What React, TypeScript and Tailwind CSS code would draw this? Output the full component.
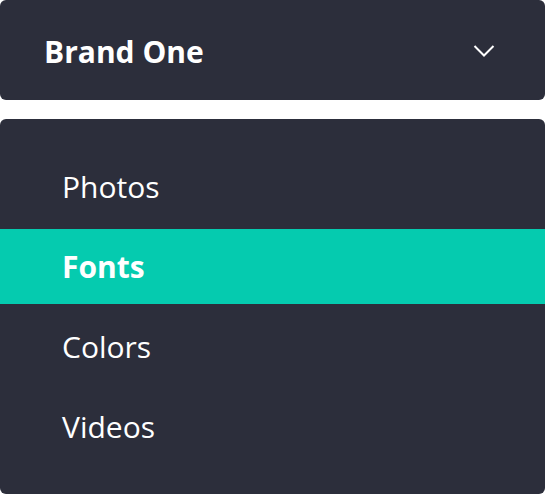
import React from 'react';

const items = ['Photos', 'Fonts', 'Colors', 'Videos'];

export default function App() {
    const active = 'Fonts';
    return (
        <div className="w-[545px] h-[494px] bg-white flex flex-col gap-[19px] font-['Open_Sans',sans-serif] text-white">
            <button className="h-[100px] w-full rounded-md bg-[#2c2e3b] flex items-center justify-between pl-[44px] pr-[50px]">
                <span className="text-[30px] font-bold leading-none mt-[3px]">Brand One</span>
                <svg width="22" height="14" viewBox="0 0 22 14" fill="none" className="mt-[2px]">
                    <path d="M1.5 2L11 11.5L20.5 2" stroke="white" strokeWidth="2" />
                </svg>
            </button>
            <ul className="h-[375px] w-full rounded-md bg-[#2c2e3b] flex flex-col gap-[5px] py-[30px]">
                {items.map((item) => (
                    <li
                        key={item}
                        className={
                            item === active
                                ? 'h-[75px] flex items-center pl-[62px] bg-[#05cbaf] text-[30px] font-bold'
                                : 'h-[75px] flex items-center pl-[62px] text-[30px] font-normal'
                        }
                    >
                        {item}
                    </li>
                ))}
            </ul>
        </div>
    );
}
